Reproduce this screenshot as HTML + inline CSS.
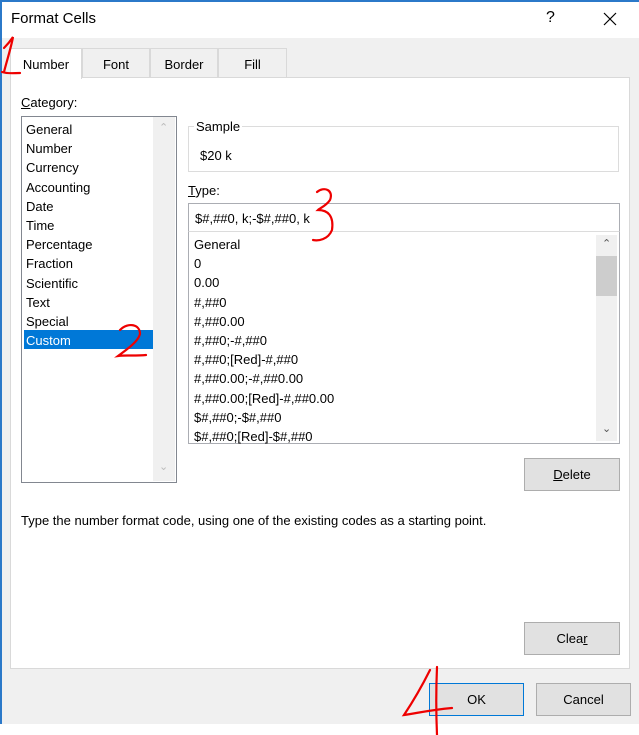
<!DOCTYPE html>
<html><head><style>
*{margin:0;padding:0;box-sizing:border-box}
body{width:639px;height:735px;background:#fff;font-family:"Liberation Sans",sans-serif;font-size:13px;color:#000;position:relative;overflow:hidden}
.a{position:absolute;white-space:nowrap}
.btn{position:absolute;background:#e1e1e1;border:1px solid #adadad;text-align:center;line-height:31px}
.tab{position:absolute;top:48px;height:29px;background:#f0f0f0;border:1px solid #d9d9d9;border-bottom:none;text-align:center;line-height:31px}
</style></head><body>
<div class="a" style="left:0;top:0;width:639px;height:2px;background:#2b79c9"></div>
<div class="a" style="left:0;top:0;width:2px;height:724px;background:#2b79c9"></div>
<div class="a" style="left:11px;top:10px;font-size:15px">Format Cells</div>
<div class="a" style="left:546px;top:9px;font-size:16px">?</div>
<svg class="a" style="left:603px;top:12px" width="14" height="14"><path d="M1 1L13 13M13 1L1 13" stroke="#000" stroke-width="1.2"/></svg>
<div class="a" style="left:2px;top:38px;width:637px;height:686px;background:#f0f0f0"></div>
<div class="a" style="left:10px;top:77px;width:620px;height:592px;background:#fff;border:1px solid #d9d9d9"></div>
<div class="tab" style="left:10px;width:72px;height:31px;background:#fff">Number</div>
<div class="tab" style="left:82px;width:68px">Font</div>
<div class="tab" style="left:150px;width:68px">Border</div>
<div class="tab" style="left:218px;width:69px">Fill</div>
<div class="a" style="left:21px;top:95px"><u>C</u>ategory:</div>
<div class="a" style="left:21px;top:116px;width:156px;height:367px;border:1px solid #828790;background:#fff"></div>
<div class="a" style="left:153px;top:117px;width:22px;height:364px;background:#f0f0f0"></div>
<div class="a" style="left:159px;top:121px;color:#bbb;font-size:11px">&#8963;</div>
<div class="a" style="left:159px;top:460px;color:#bbb;font-size:11px">&#8964;</div>
<div class="a" style="left:24px;top:330px;width:129px;height:19px;background:#0078d7"></div>
<div class="a" style="left:26px;top:120px;line-height:19.2px">General<br>Number<br>Currency<br>Accounting<br>Date<br>Time<br>Percentage<br>Fraction<br>Scientific<br>Text<br>Special<br><span style="color:#fff">Custom</span></div>
<div class="a" style="left:188px;top:126px;width:431px;height:46px;border:1px solid #dcdcdc"></div>
<div class="a" style="left:194px;top:119px;background:#fff;padding:0 2px">Sample</div>
<div class="a" style="left:200px;top:148px">$20 k</div>
<div class="a" style="left:188px;top:183px"><u>T</u>ype:</div>
<div class="a" style="left:188px;top:203px;width:432px;height:29px;border:1px solid #abadb3;padding:7px 0 0 6px">$#,##0, k;-$#,##0, k</div>
<div class="a" style="left:188px;top:231px;width:432px;height:213px;border:1px solid #abadb3;border-top-color:#dcdcdc"></div>
<div class="a" style="left:596px;top:235px;width:21px;height:206px;background:#f0f0f0"></div>
<div class="a" style="left:596px;top:256px;width:21px;height:40px;background:#cdcdcd"></div>
<div class="a" style="left:602px;top:237px;color:#555;font-size:11px">&#8963;</div>
<div class="a" style="left:602px;top:422px;color:#555;font-size:11px">&#8964;</div>
<div class="a" style="left:194px;top:235px;line-height:19.2px;height:211px;overflow:hidden">General<br>0<br>0.00<br>#,##0<br>#,##0.00<br>#,##0;-#,##0<br>#,##0;[Red]-#,##0<br>#,##0.00;-#,##0.00<br>#,##0.00;[Red]-#,##0.00<br>$#,##0;-$#,##0<br>$#,##0;[Red]-$#,##0</div>
<div class="btn" style="left:524px;top:458px;width:96px;height:33px"><u>D</u>elete</div>
<div class="a" style="left:21px;top:513px">Type the number format code, using one of the existing codes as a starting point.</div>
<div class="btn" style="left:524px;top:622px;width:96px;height:33px">Clea<u>r</u></div>
<div class="btn" style="left:429px;top:683px;width:95px;height:33px;border-color:#0078d7">OK</div>
<div class="btn" style="left:536px;top:683px;width:95px;height:33px">Cancel</div>
<svg class="a" style="left:0;top:0" width="639" height="735" fill="none" stroke="#e00" stroke-width="2.2" stroke-linecap="round">
<path d="M4 48 C8 44 11 40 13 37 C11 48 7 60 4 72 M2 72 C8 74 14 73 20 73"/>
<path d="M120 330 C128 322 140 324 140 334 C138 342 126 350 118 356 C126 355 136 356 146 355"/>
<path d="M317 192 C324 186 334 190 330 200 C326 206 320 208 318 210 C328 210 334 216 332 230 C328 240 318 241 313 240"/>
<path d="M430 670 C420 690 410 706 404 715 C418 713 430 710 452 708 M437 667 C436 690 436 712 437 735"/>
</svg>
</body></html>
